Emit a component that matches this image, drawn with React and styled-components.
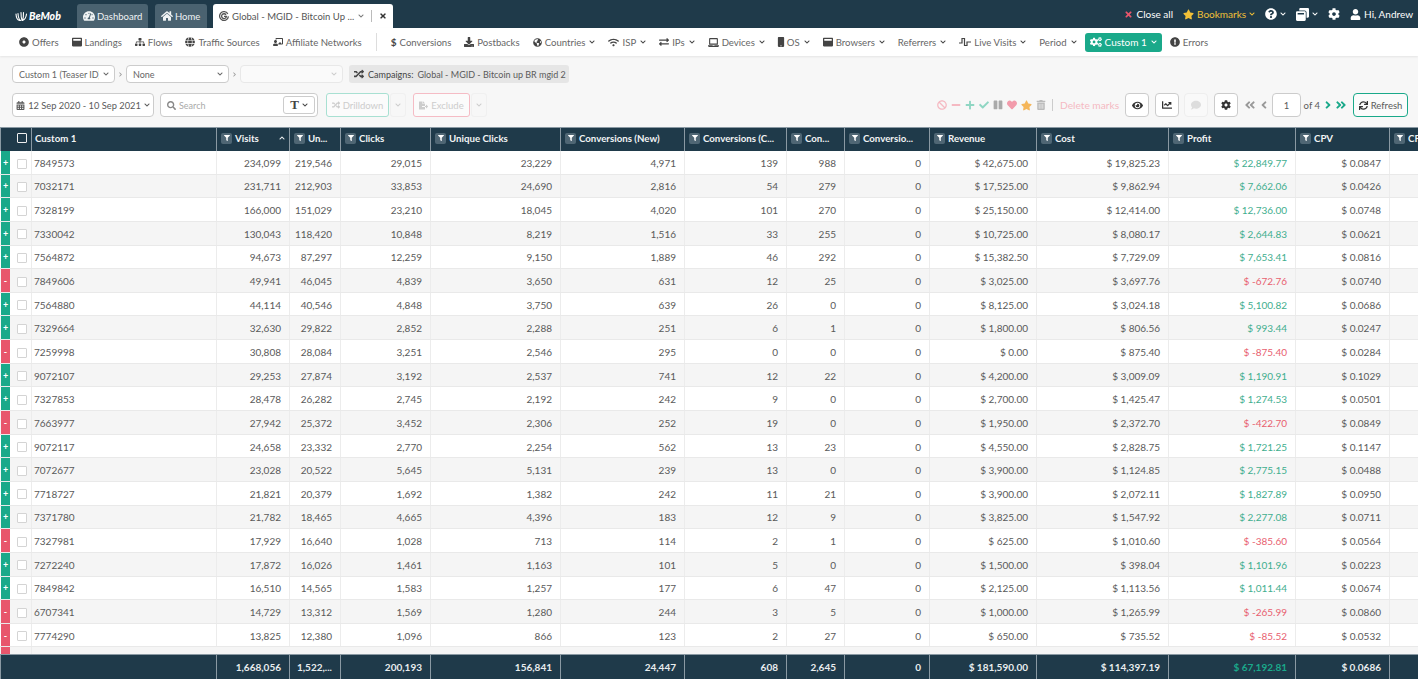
import React from "react";
import styled, { createGlobalStyle } from "styled-components";
import {
  FaTachometerAlt, FaHome, FaTimes, FaStar, FaQuestionCircle, FaWindowRestore, FaCog, FaUser,
  FaChevronDown, FaDotCircle, FaWindowMaximize, FaSitemap, FaGlobe, FaChalkboardTeacher, FaDownload,
  FaGlobeAmericas, FaWifi, FaExchangeAlt, FaLaptop, FaMobile, FaCogs, FaExclamationCircle, FaRandom,
  FaCalendarAlt, FaSearch, FaFileExport, FaBan, FaMinus, FaPlus, FaCheck, FaPause, FaHeart, FaTrashAlt,
  FaEye, FaChartLine, FaComment, FaAngleDoubleLeft, FaAngleLeft, FaAngleRight, FaAngleDoubleRight, FaSync,
  FaFilter, FaChevronRight, FaChevronUp,
} from "react-icons/fa";

const DARK = "#1f3a4a";
const GREEN = "#1aa98a";
const RED = "#e8566c";
const COLUMNS = "32px 185px 73px 51px 90px 130px 124px 102px 58px 85px 107px 132px 127px 94px 120px";

const GlobalStyle = createGlobalStyle`
  html, body { margin: 0; height: 100%; overflow: hidden; }
  body { font-family: Lato, "Liberation Sans", sans-serif; font-size: 10px; color: #5a5a5a; background: #f7f7f7; }
  * { box-sizing: border-box; }
  svg { flex: none; }
`;

const Page = styled.div`
  height: 100vh;
  display: flex;
  flex-direction: column;
  overflow: hidden;
`;

const TopBar = styled.header`
  height: 28px;
  flex: none;
  background: ${DARK};
  display: flex;
  align-items: flex-end;
  padding-left: 15px;
  color: #fff;
`;

const Logo = styled.div`
  width: 62px;
  height: 24px;
  display: flex;
  align-items: center;
  gap: 1px;
  font-size: 10.5px;
  font-weight: 900;
  font-style: italic;
`;

const Tab = styled.div`
  height: 24px;
  margin-right: ${(p) => p.$gap ?? 6}px;
  padding: 0 6px;
  border-radius: 3px 3px 0 0;
  background: ${(p) => (p.$active ? "#fff" : "#4a6270")};
  color: ${(p) => (p.$active ? "#555" : "#f0f3f4")};
  display: flex;
  align-items: center;
  gap: ${(p) => (p.$active ? 3 : 2)}px;
  font-size: 9.5px;
  width: ${(p) => p.$width}px;
  white-space: nowrap;
`;

const TabCaret = styled.span`
  margin-left: auto;
  display: flex;
  color: #777;
`;

const TabClose = styled.span`
  margin-left: 4px;
  padding-left: 7px;
  border-left: 1px solid #bbb;
  display: flex;
  height: 12px;
  align-items: center;
  color: #333;
`;

const TopRight = styled.div`
  margin-left: auto;
  height: 28px;
  display: flex;
  align-items: center;
  gap: 10px;
  padding-right: 5px;
  font-size: 10px;
`;

const TopItem = styled.span`
  display: flex;
  align-items: center;
  gap: 3px;
  color: ${(p) => p.$color || "#fff"};
`;

const NavBar = styled.nav`
  height: 28px;
  flex: none;
  background: #fff;
  display: flex;
  align-items: center;
  gap: 13px;
  padding-left: 19px;
  font-size: 9.6px;
  box-shadow: 0 1px 2px rgba(0, 0, 0, 0.08);
  white-space: nowrap;
`;

const NavItem = styled.span`
  display: flex;
  align-items: center;
  gap: 3px;
  color: #666;
  svg { color: #444; }
`;

const NavCaret = styled.span`
  display: flex;
  margin-left: 1px;
`;

const OsIcon = styled(FaMobile)`
  margin: 0 -2px;
`;

const Dollar = styled.b`
  color: #444;
  font-size: 10px;
`;

const NavDivider = styled.span`
  width: 1px;
  height: 18px;
  background: #ddd;
  margin: 0 1px;
`;

const CustomButton = styled.span`
  height: 19px;
  margin-left: -5px;
  margin-right: -5px;
  padding: 0 5px;
  border-radius: 3px;
  background: ${GREEN};
  color: #fff;
  font-size: 10px;
  display: flex;
  align-items: center;
  gap: 3px;
`;

const GroupRow = styled.div`
  height: 18px;
  flex: none;
  margin: 9px 0 0 12px;
  display: flex;
  align-items: center;
`;

const Select = styled.div`
  width: 103px;
  height: 18px;
  background: ${(p) => (p.$disabled ? "#fafafa" : "#fff")};
  border: 1px solid ${(p) => (p.$disabled ? "#e8e8e8" : "#ccc")};
  border-radius: 4px;
  padding: 0 5px 0 6px;
  display: flex;
  align-items: center;
  justify-content: space-between;
  gap: 4px;
  font-size: 9px;
  color: #666;
  white-space: nowrap;
  svg { color: ${(p) => (p.$disabled ? "#ccc" : "#666")}; }
`;

const SelectValue = styled.span`
  overflow: hidden;
`;

const Separator = styled.span`
  width: 11px;
  display: flex;
  justify-content: center;
  color: #999;
`;

const Chip = styled.div`
  height: 18px;
  margin-left: 6px;
  padding: 0 5px;
  width: 220px;
  background: #e6e6e6;
  border-radius: 3px;
  display: flex;
  align-items: center;
  gap: 4px;
  font-size: 9px;
  white-space: nowrap;
  b { font-weight: 400; color: #444; }
`;

const ActionRow = styled.div`
  height: 24px;
  flex: none;
  margin: 10px 10px 10px 12px;
  display: flex;
  align-items: center;
`;

const DateButton = styled.div`
  width: 142px;
  height: 24px;
  background: #fff;
  border: 1px solid #ccc;
  border-radius: 4px;
  display: flex;
  align-items: center;
  justify-content: center;
  gap: 3px;
  font-size: 9.3px;
  white-space: nowrap;
`;

const SearchBox = styled.div`
  width: 158px;
  height: 24px;
  margin-left: 6px;
  background: #fff;
  border: 1px solid #ccc;
  border-radius: 4px;
  display: flex;
  align-items: center;
  padding: 0 2px 0 6px;
  gap: 3px;
  color: #aaa;
  font-size: 9px;
`;

const TypeButton = styled.span`
  margin-left: auto;
  width: 32px;
  height: 18px;
  border: 1px solid #ccc;
  border-radius: 3px;
  display: flex;
  align-items: center;
  justify-content: center;
  gap: 3px;
  color: #444;
  font-family: "Liberation Serif", serif;
  font-weight: 700;
  font-size: 13px;
`;

const GhostButton = styled.div`
  height: 24px;
  width: ${(p) => p.$width}px;
  margin-left: ${(p) => p.$left}px;
  background: #fbfbfb;
  border: 1px solid ${(p) => p.$color};
  border-radius: 3px;
  display: flex;
  align-items: center;
  justify-content: center;
  gap: 3px;
  color: #ccc;
  font-size: 9.5px;
`;

const GhostCaret = styled.div`
  width: 16px;
  height: 24px;
  margin-left: 1px;
  border: 1px solid #f0f0f0;
  border-radius: 3px;
  display: flex;
  align-items: center;
  justify-content: center;
  color: #ccc;
`;

const Marks = styled.div`
  margin-left: auto;
  display: flex;
  align-items: center;
  gap: 4px;
  font-size: 10.2px;
`;

const Mark = styled.span`
  display: flex;
  color: ${(p) => p.$color};
`;

const DeleteMarks = styled.span`
  margin-left: 2px;
  padding-left: 7px;
  border-left: 1px solid #ccc;
  color: #f5b9c2;
  line-height: 12px;
`;

const IconButton = styled.div`
  width: 24px;
  height: 24px;
  margin-left: ${(p) => p.$left ?? 6}px;
  background: ${(p) => (p.$faded ? "#f9f9f9" : "#fff")};
  border: 1px solid ${(p) => (p.$faded ? "#eee" : "#ccc")};
  border-radius: 4px;
  display: flex;
  align-items: center;
  justify-content: center;
  color: ${(p) => (p.$faded ? "#ddd" : "#333")};
`;

const Pager = styled.div`
  margin-left: 6px;
  display: flex;
  align-items: center;
  gap: 1.5px;
  font-size: 9.5px;
`;

const PagerIcon = styled.span`
  display: flex;
  color: ${(p) => (p.$on ? GREEN : "#999")};
`;

const PageInput = styled.div`
  width: 29px;
  height: 24px;
  margin: 0 1px;
  background: #fff;
  border: 1px solid #ccc;
  border-radius: 4px;
  display: flex;
  align-items: center;
  justify-content: center;
`;

const RefreshButton = styled.div`
  width: 55px;
  height: 24px;
  margin-left: 6px;
  background: #fbfbfb;
  border: 1px solid ${GREEN};
  border-radius: 4px;
  display: flex;
  align-items: center;
  justify-content: center;
  gap: 3px;
  font-size: 9.5px;
`;

const Table = styled.div`
  flex: 1;
  min-height: 0;
  display: flex;
  flex-direction: column;
  overflow: hidden;
  background: #fff;
`;

const HeadRow = styled.div`
  flex: none;
  height: 24px;
  display: grid;
  grid-template-columns: ${COLUMNS};
  background: ${DARK};
  color: #f2f4f5;
  font-size: 9.7px;
  font-weight: 700;
  box-shadow: inset 1px 1px 0 #8a99a3;
`;

const HeadCell = styled.div`
  display: flex;
  align-items: center;
  gap: 3px;
  padding: 0 4px 2px;
  border-right: 1px solid #8a99a3;
  white-space: nowrap;
  overflow: hidden;
`;

const CustomHead = styled(HeadCell)`
  padding-left: 3px;
`;

const FilterIcon = styled.span`
  width: 11px;
  height: 11px;
  flex: none;
  border-radius: 2px;
  background: #4f6674;
  display: flex;
  align-items: center;
  justify-content: center;
  color: #fff;
`;

const Sort = styled.span`
  margin-left: auto;
  display: flex;
`;

const HeadCheck = styled.span`
  width: 10px;
  height: 10px;
  margin-left: 13px;
  border: 1.5px solid #eee;
  border-radius: 1px;
`;

const Body = styled.div`
  flex: 1;
  min-height: 0;
  overflow: hidden;
`;

const Row = styled.div`
  height: 23.65px;
  display: grid;
  grid-template-columns: ${COLUMNS};
  background: ${(p) => (p.$odd ? "#f5f5f5" : "#fff")};
  border-bottom: 1px solid #e9e9e9;
`;

const Cell = styled.div`
  display: flex;
  align-items: center;
  justify-content: ${(p) => (p.$left ? "flex-start" : "flex-end")};
  padding: 1px ${(p) => (p.$left ? 2 : 8)}px 0;
  border-right: 1px solid #ececec;
  font-size: 10px;
  white-space: nowrap;
  color: ${(p) => (p.$tone === "up" ? "#3fae8e" : p.$tone === "down" ? "#e8606f" : "#5a5a5a")};
`;

const MarkCell = styled.div`
  display: flex;
  align-items: stretch;
  border-right: 1px solid #ececec;
`;

const Indicator = styled.span`
  width: 9px;
  margin-left: 1px;
  background: ${(p) => (p.$up ? GREEN : RED)};
  color: #fff;
  font-size: 9px;
  font-weight: 700;
  display: flex;
  align-items: center;
  justify-content: center;
`;

const RowCheck = styled.span`
  width: 10px;
  height: 10px;
  margin: 7.5px 0 auto 7px;
  background: #fff;
  border: 1px solid #d4d4d4;
  border-radius: 1px;
`;

const FootRow = styled.div`
  flex: none;
  height: 25px;
  display: grid;
  grid-template-columns: ${COLUMNS};
  background: ${DARK};
  color: #e9edef;
  font-size: 10px;
  font-weight: 700;
  box-shadow: inset 1px 1px 0 #8a99a3;
`;

const FootCell = styled.div`
  grid-column: ${(p) => (p.$wide ? "span 2" : "auto")};
  display: flex;
  align-items: center;
  justify-content: flex-end;
  padding: 0 8px;
  border-right: 1px solid #8a99a3;
  white-space: nowrap;
  color: ${(p) => (p.$green ? GREEN : "inherit")};
`;

const Chevron = ({ size = 6 }) => <FaChevronDown size={size} />;

const LiveIcon = () => (
  <svg width="12" height="10" viewBox="0 0 12 10" fill="none" stroke="#444" strokeWidth="1.2">
    <path d="M0 6h3V1.500h2.500V8.500H8V5h4" />
  </svg>
);

const LogoMark = () => (
  <svg width="13" height="11" viewBox="0 0 13 11" fill="none" stroke="#fff" strokeWidth="1.1" strokeLinecap="round">
    <path d="M1 3c.2 3.500 1.600 6 3.500 6.500M3 2.500c.2 3.500 1 6 2.500 7M6 1.500c0 3 .3 6 1 8M8.500 1.500C8.600 4.500 8.400 7 7.500 9.500M11.500 3c-.3 3-1.500 5.500-4 6.500" />
  </svg>
);

const SwirlIcon = () => (
  <svg width="10" height="10" viewBox="0 0 10 10" fill="none" stroke="#555" strokeWidth="1.300">
    <path d="M8.800 2.800A4.400 4.400 0 1 0 9.400 5.400" />
    <path d="M7 3.800A2.400 2.400 0 1 0 7.400 5.400H5" />
  </svg>
);

const navLinks = [
  [FaDotCircle, "Offers"], [FaWindowMaximize, "Landings"], [FaSitemap, "Flows"], [FaGlobe, "Traffic Sources"],
  [FaChalkboardTeacher, "Affiliate Networks"],
];
const navMenus = [
  [FaGlobeAmericas, "Countries", 9], [FaWifi, "ISP", 11], [FaExchangeAlt, "IPs", 10], [FaLaptop, "Devices", 11],
  [OsIcon, "OS", 10], [FaWindowMaximize, "Browsers", 10], [null, "Referrers"], [LiveIcon, "Live Visits"], [null, "Period"],
];

const columns = [
  ["Visits", true], ["Un..."], ["Clicks"], ["Unique Clicks"], ["Conversions (New)"], ["Conversions (C..."], ["Con..."],
  ["Conversio..."], ["Revenue"], ["Cost"], ["Profit"], ["CPV"], ["CPC"],
];

const rows = [
  "7849573|234,099|219,546|29,015|23,229|4,971|139|988|0|42,675.00|19,825.23|22,849.77|0.0847",
  "7032171|231,711|212,903|33,853|24,690|2,816|54|279|0|17,525.00|9,862.94|7,662.06|0.0426",
  "7328199|166,000|151,029|23,210|18,045|4,020|101|270|0|25,150.00|12,414.00|12,736.00|0.0748",
  "7330042|130,043|118,420|10,848|8,219|1,516|33|255|0|10,725.00|8,080.17|2,644.83|0.0621",
  "7564872|94,673|87,297|12,259|9,150|1,889|46|292|0|15,382.50|7,729.09|7,653.41|0.0816",
  "7849606|49,941|46,045|4,839|3,650|631|12|25|0|3,025.00|3,697.76|-672.76|0.0740",
  "7564880|44,114|40,546|4,848|3,750|639|26|0|0|8,125.00|3,024.18|5,100.82|0.0686",
  "7329664|32,630|29,822|2,852|2,288|251|6|1|0|1,800.00|806.56|993.44|0.0247",
  "7259998|30,808|28,084|3,251|2,546|295|0|0|0|0.00|875.40|-875.40|0.0284",
  "9072107|29,253|27,874|3,192|2,537|741|12|22|0|4,200.00|3,009.09|1,190.91|0.1029",
  "7327853|28,478|26,282|2,745|2,192|242|9|0|0|2,700.00|1,425.47|1,274.53|0.0501",
  "7663977|27,942|25,372|3,452|2,306|252|19|0|0|1,950.00|2,372.70|-422.70|0.0849",
  "9072117|24,658|23,332|2,770|2,254|562|13|23|0|4,550.00|2,828.75|1,721.25|0.1147",
  "7072677|23,028|20,522|5,645|5,131|239|13|0|0|3,900.00|1,124.85|2,775.15|0.0488",
  "7718727|21,821|20,379|1,692|1,382|242|11|21|0|3,900.00|2,072.11|1,827.89|0.0950",
  "7371780|21,782|18,465|4,665|4,396|183|12|9|0|3,825.00|1,547.92|2,277.08|0.0711",
  "7327981|17,929|16,640|1,028|713|114|2|1|0|625.00|1,010.60|-385.60|0.0564",
  "7272240|17,872|16,026|1,461|1,163|101|5|0|0|1,500.00|398.04|1,101.96|0.0223",
  "7849842|16,510|14,565|1,583|1,257|177|6|47|0|2,125.00|1,113.56|1,011.44|0.0674",
  "6707341|14,729|13,312|1,569|1,280|244|3|5|0|1,000.00|1,265.99|-265.99|0.0860",
  "7774290|13,825|12,380|1,096|866|123|2|27|0|650.00|735.52|-85.52|0.0532",
].map((line) => line.split("|"));

const totals = ["1,668,056", "1,522,...", "200,193", "156,841", "24,447", "608", "2,645", "0", "$ 181,590.00", "$ 114,397.19", "$ 67,192.81", "$ 0.0686", ""];

const DataRow = ({ cells, odd }) => {
  const [id, ...values] = cells;
  const profit = values[10];
  const negative = profit.startsWith("-");
  return (
    <Row $odd={odd}>
      <MarkCell>
        <Indicator $up={!negative}>{negative ? "-" : "+"}</Indicator>
        <RowCheck />
      </MarkCell>
      <Cell $left>{id}</Cell>
      {values.map((value, i) => {
        if (i === 10) {
          return <Cell key={i} $tone={negative ? "down" : "up"}>{`$ ${value}`}</Cell>;
        }
        return <Cell key={i}>{i === 8 || i === 9 || i === 11 ? `$ ${value}` : value}</Cell>;
      })}
      <Cell />
    </Row>
  );
};

export default function App() {
  return (
    <Page>
      <GlobalStyle />
      <TopBar>
        <Logo><LogoMark />BeMob</Logo>
        <Tab $width={71} $gap={7}><FaTachometerAlt size={12} />Dashboard</Tab>
        <Tab $width={52}><FaHome size={12} />Home</Tab>
        <Tab $active $width={180}>
          <SwirlIcon />
          Global - MGID - Bitcoin Up ...
          <TabCaret><Chevron /></TabCaret>
          <TabClose><FaTimes size={8} /></TabClose>
        </Tab>
        <TopRight>
          <TopItem><FaTimes size={9} color="#e8566c" />Close all</TopItem>
          <TopItem $color="#f2c037"><FaStar size={11} />Bookmarks<Chevron /></TopItem>
          <TopItem><FaQuestionCircle size={12} /><Chevron /></TopItem>
          <TopItem><FaWindowRestore size={13} /><Chevron /></TopItem>
          <TopItem><FaCog size={12} /></TopItem>
          <TopItem><FaUser size={11} />Hi, Andrew</TopItem>
        </TopRight>
      </TopBar>

      <NavBar>
        {navLinks.map(([Icon, label]) => (
          <NavItem key={label}><Icon size={10} />{label}</NavItem>
        ))}
        <NavDivider />
        <NavItem><Dollar>$</Dollar>Conversions</NavItem>
        <NavItem><FaDownload size={10} />Postbacks</NavItem>
        {navMenus.map(([Icon, label, size]) => (
          <NavItem key={label}>
            {Icon && <Icon size={size} />}{label}<NavCaret><Chevron /></NavCaret>
          </NavItem>
        ))}
        <CustomButton><FaCogs size={12} />Custom 1<NavCaret><Chevron /></NavCaret></CustomButton>
        <NavItem><FaExclamationCircle size={10} />Errors</NavItem>
      </NavBar>

      <GroupRow>
        <Select><SelectValue>Custom 1 (Teaser ID)</SelectValue><Chevron /></Select>
        <Separator><FaChevronRight size={5} /></Separator>
        <Select><SelectValue>None</SelectValue><Chevron /></Select>
        <Separator><FaChevronRight size={5} /></Separator>
        <Select $disabled><SelectValue /><Chevron /></Select>
        <Chip><FaRandom size={10} color="#444" /><b>Campaigns:</b> Global - MGID - Bitcoin up BR mgid 2</Chip>
      </GroupRow>

      <ActionRow>
        <DateButton><FaCalendarAlt size={9} />12 Sep 2020 - 10 Sep 2021<Chevron /></DateButton>
        <SearchBox>
          <FaSearch size={9} color="#888" />Search
          <TypeButton>T<Chevron /></TypeButton>
        </SearchBox>
        <GhostButton $width={63} $left={8} $color="#a8e0d2"><FaRandom size={8} />Drilldown</GhostButton>
        <GhostCaret><Chevron /></GhostCaret>
        <GhostButton $width={57} $left={7} $color="#f5bcc5"><FaFileExport size={9} />Exclude</GhostButton>
        <GhostCaret><Chevron /></GhostCaret>
        <Marks>
          <Mark $color="#f5b9c2"><FaBan size={10} /></Mark>
          <Mark $color="#f5b9c2"><FaMinus size={10} /></Mark>
          <Mark $color="#8fd6c3"><FaPlus size={10} /></Mark>
          <Mark $color="#8fd6c3"><FaCheck size={10} /></Mark>
          <Mark $color="#aaa"><FaPause size={10} /></Mark>
          <Mark $color="#f29bab"><FaHeart size={10} /></Mark>
          <Mark $color="#f5b65a"><FaStar size={11} /></Mark>
          <Mark $color="#bbb"><FaTrashAlt size={10} /></Mark>
          <DeleteMarks>Delete marks</DeleteMarks>
        </Marks>
        <IconButton><FaEye size={11} /></IconButton>
        <IconButton><FaChartLine size={10} /></IconButton>
        <IconButton $faded $left={5}><FaComment size={10} /></IconButton>
        <IconButton><FaCog size={10} /></IconButton>
        <Pager>
          <PagerIcon><FaAngleDoubleLeft size={12} /></PagerIcon>
          <PagerIcon><FaAngleLeft size={12} /></PagerIcon>
          <PageInput>1</PageInput>
          of 4
          <PagerIcon $on><FaAngleRight size={12} /></PagerIcon>
          <PagerIcon $on><FaAngleDoubleRight size={12} /></PagerIcon>
        </Pager>
        <RefreshButton><FaSync size={9} color="#333" />Refresh</RefreshButton>
      </ActionRow>

      <Table>
        <HeadRow>
          <HeadCell><HeadCheck /></HeadCell>
          <CustomHead>Custom 1</CustomHead>
          {columns.map(([label, sorted]) => (
            <HeadCell key={label}>
              <FilterIcon><FaFilter size={6} /></FilterIcon>{label}
              {sorted && <Sort><FaChevronUp size={6} /></Sort>}
            </HeadCell>
          ))}
        </HeadRow>
        <Body>
          {rows.map((cells, i) => <DataRow key={cells[0]} cells={cells} odd={i % 2 === 1} />)}
          <Row $odd>
            <MarkCell><Indicator $up={false} /></MarkCell>
          </Row>
        </Body>
        <FootRow>
          <FootCell $wide />
          {totals.map((value, i) => <FootCell key={i} $green={i === 10}>{value}</FootCell>)}
        </FootRow>
      </Table>
    </Page>
  );
}
